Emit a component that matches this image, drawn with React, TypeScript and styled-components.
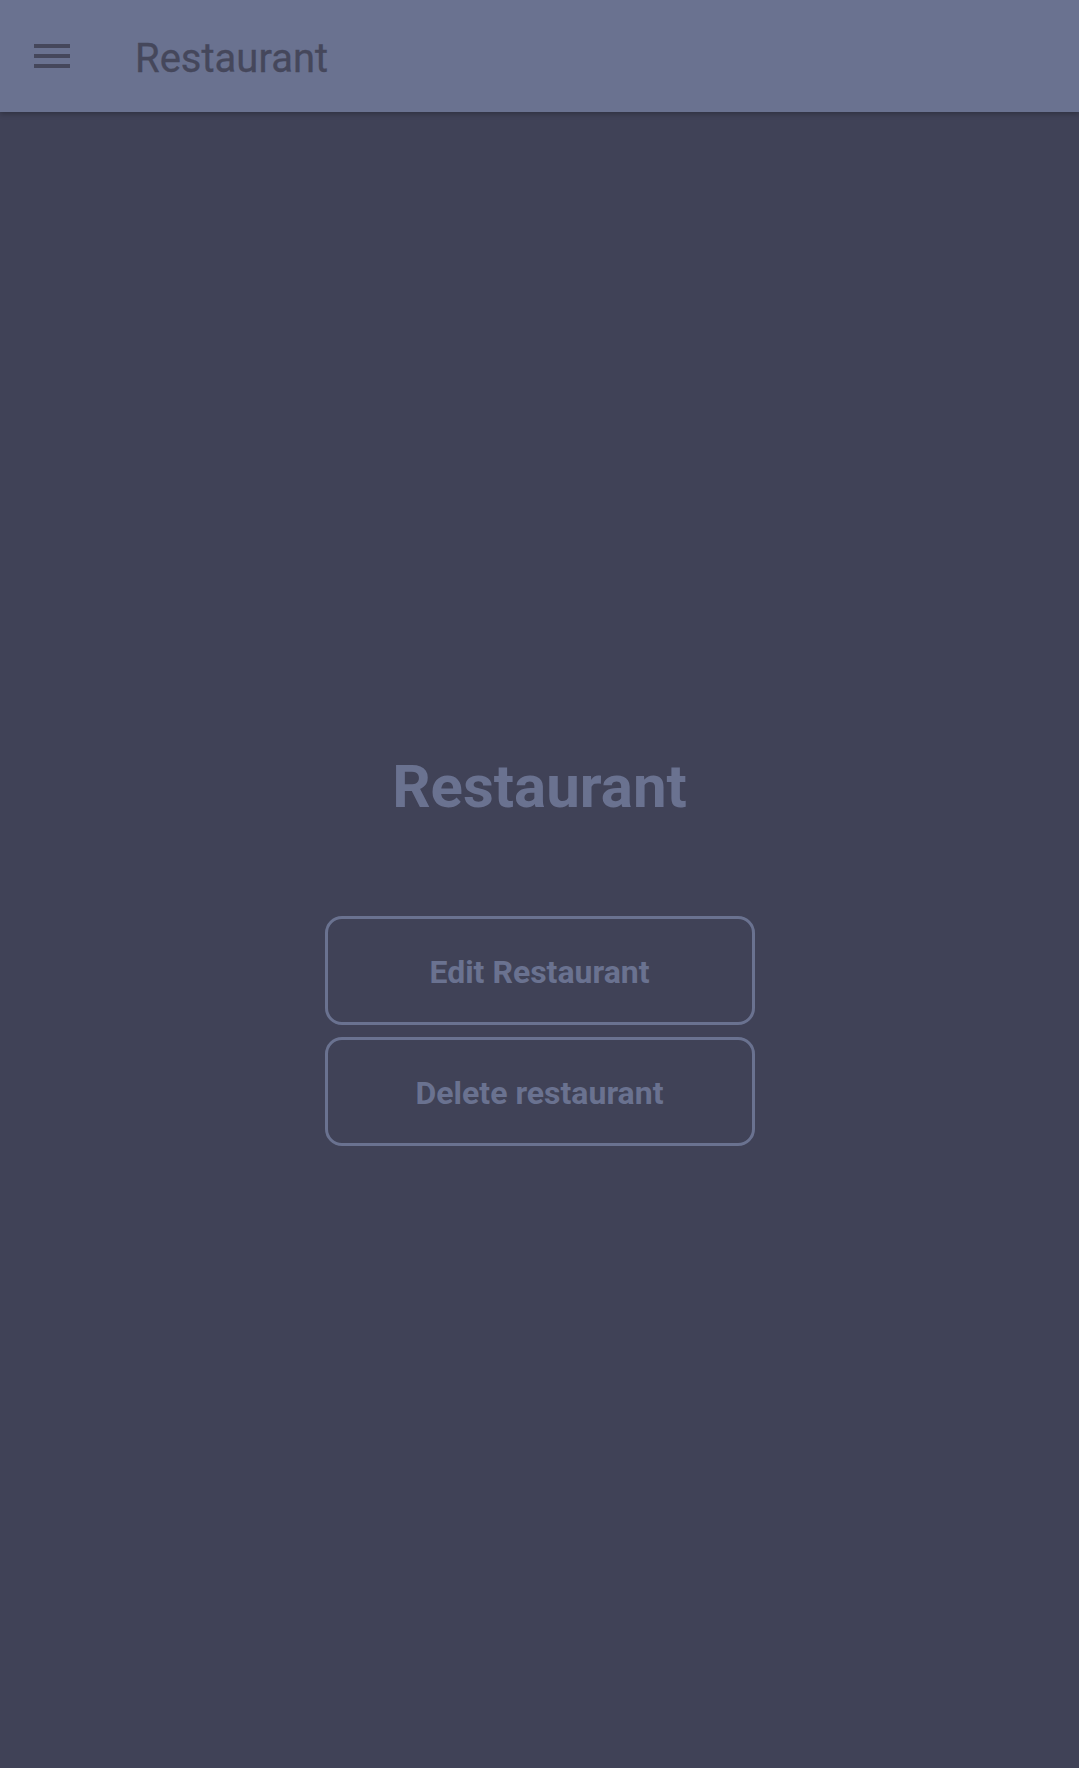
import React from "react";
import styled, { createGlobalStyle } from "styled-components";

const Global = createGlobalStyle`
  html, body { margin: 0; padding: 0; background: #404257; }
  body { font-family: Roboto, "Liberation Sans", sans-serif; }
  * { box-sizing: border-box; }
`;

const Page = styled.div`
  min-height: 100vh;
  display: flex;
  flex-direction: column;
  background: #404257;
`;

const TopBar = styled.header`
  height: 112px;
  background: #6a7290;
  display: flex;
  align-items: center;
  padding-left: 28px;
  box-shadow: 0 2px 5px rgba(0, 0, 0, 0.25);
  position: relative;
  z-index: 1;
`;

const MenuButton = styled.button`
  width: 48px;
  height: 48px;
  padding: 0;
  border: none;
  background: transparent;
  color: #45475b;
  display: flex;
  align-items: center;
  justify-content: center;
`;

const BarTitle = styled.h1`
  margin: 4px 0 0 59px;
  font-size: 40px;
  font-weight: 400;
  color: #45475b;
  letter-spacing: 0;
  -webkit-text-stroke: 0.3px #45475b;
`;

const Main = styled.main`
  flex: 1;
  display: flex;
  flex-direction: column;
  align-items: center;
  padding-top: 639px;
`;

const Heading = styled.h2`
  margin: 0;
  font-size: 60px;
  line-height: 72px;
  font-weight: 700;
  color: #6a7290;
`;

const Actions = styled.div`
  margin-top: 93px;
  display: flex;
  flex-direction: column;
  gap: 12px;
`;

const OutlineButton = styled.button`
  width: 430px;
  height: 109px;
  border: 3px solid #6a7290;
  border-radius: 17px;
  background: transparent;
  color: #6a7290;
  font-family: Roboto, "Liberation Sans", sans-serif;
  font-size: 32px;
  font-weight: 700;
  display: flex;
  align-items: center;
  justify-content: center;
  padding: 2px 0 0;
`;

export default function App() {
  return (
    <Page>
      <Global />
      <TopBar>
        <MenuButton aria-label="menu">
          <svg width="48" height="48" viewBox="0 0 24 24" fill="currentColor">
            <path d="M3 18h18v-2H3v2zm0-5h18v-2H3v2zm0-7v2h18V6H3z" />
          </svg>
        </MenuButton>
        <BarTitle>Restaurant</BarTitle>
      </TopBar>
      <Main>
        <Heading>Restaurant</Heading>
        <Actions>
          <OutlineButton>Edit Restaurant</OutlineButton>
          <OutlineButton>Delete restaurant</OutlineButton>
        </Actions>
      </Main>
    </Page>
  );
}
